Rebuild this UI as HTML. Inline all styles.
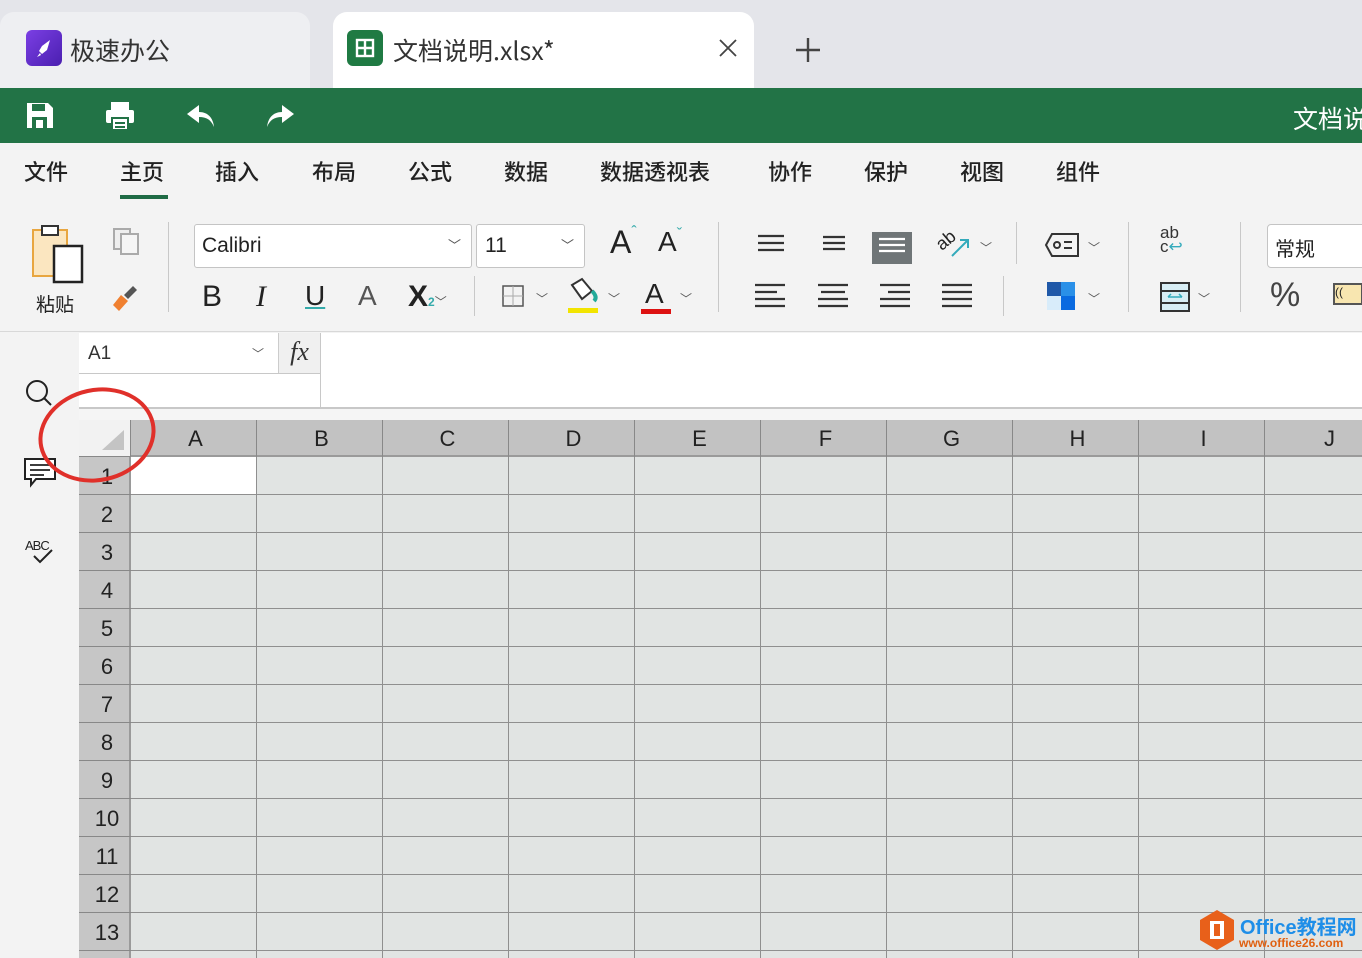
<!DOCTYPE html>
<html><head><meta charset="utf-8"><style>
*{margin:0;padding:0;box-sizing:border-box}
body{width:1362px;height:958px;overflow:hidden;background:#f3f3f3;font-family:"Liberation Sans","Noto Sans CJK SC",sans-serif;position:relative;color:#222}
.a{position:absolute}
.cjk{font-family:"Noto Sans CJK SC",sans-serif}
.menu span{position:absolute;top:155px;font-size:22px;font-family:"Noto Sans CJK SC",sans-serif;font-weight:500;color:#222}
.col{position:absolute;top:420px;height:37px;font-size:22px;text-align:center;line-height:38px;color:#222;border-right:1px solid #888;padding-left:4px}
.row{position:absolute;left:79px;width:52px;height:38px;font-size:22px;text-align:center;line-height:40px;border-bottom:1px solid #888;color:#222;padding-left:4px}
.ic{position:absolute}
.sep{position:absolute;width:1px;background:#c8c8c8}
</style></head><body>
<div class="a" style="left:0;top:0;width:1362px;height:88px;background:#e4e5ea"></div>
<div class="a" style="left:0;top:12px;width:310px;height:76px;background:#eeeff2;border-radius:14px 14px 0 0"></div>
<div class="a" style="left:26px;top:30px;width:36px;height:36px;background:linear-gradient(135deg,#7b3fe4,#4a1fb0);border-radius:6px"></div>
<svg class="ic" style="left:30px;top:34px" width="28" height="28" viewBox="0 0 28 28"><path d="M20 6 L12 12 L9 17 L12 20 L17 16 Z" fill="#fff"/><path d="M10 19 L7 23 L11 21Z" fill="#fff"/></svg>
<div class="a cjk" style="left:70px;top:32px;font-size:25px;color:#333">极速办公</div>
<div class="a" style="left:333px;top:12px;width:421px;height:76px;background:#fff;border-radius:14px 14px 0 0"></div>
<div class="a" style="left:347px;top:30px;width:36px;height:36px;background:#1f7a43;border-radius:6px"></div>
<svg class="ic" style="left:355px;top:38px" width="20" height="20"><rect x="2" y="2" width="16" height="16" fill="none" stroke="#fff" stroke-width="2.4"/><path d="M10 2V18M2 10H18" stroke="#fff" stroke-width="2.4"/></svg>
<div class="a cjk" style="left:393px;top:32px;font-size:25px;color:#333">文档说明.xlsx*</div>
<svg class="ic" style="left:719px;top:39px" width="18" height="18"><path d="M1 1L17 17M17 1L1 17" stroke="#444" stroke-width="1.8"/></svg>
<svg class="ic" style="left:795px;top:37px" width="26" height="26"><path d="M13 1V25M1 13H25" stroke="#444" stroke-width="2.4"/></svg>
<div class="a" style="left:0;top:88px;width:1362px;height:55px;background:#227346"></div>
<svg class="ic" style="left:25px;top:100px" width="30" height="30" viewBox="0 0 30 30"><path d="M2 3h21l5 5v20H2z" fill="#fff"/><rect x="7" y="4" width="13" height="7" fill="#227346"/><rect x="7" y="17" width="15" height="11" fill="#227346"/><rect x="11" y="20" width="7" height="8" fill="#fff"/></svg>
<svg class="ic" style="left:104px;top:100px" width="32" height="32" viewBox="0 0 32 32"><rect x="7" y="2" width="18" height="8" fill="#fff"/><rect x="2" y="10" width="28" height="13" rx="2" fill="#fff"/><rect x="8" y="18" width="16" height="12" fill="#fff" stroke="#227346" stroke-width="2"/><path d="M11 23h10M11 27h10" stroke="#227346" stroke-width="2"/></svg>
<svg class="ic" style="left:185px;top:103px" width="32" height="26" viewBox="0 0 32 26"><path d="M14 2L2 11l12 9v-6c8 0 12 3 15 10-1-9-6-15-15-15z" fill="#fff"/></svg>
<svg class="ic" style="left:264px;top:103px" width="32" height="26" viewBox="0 0 32 26"><path d="M18 2l12 9-12 9v-6c-8 0-12 3-15 10 1-9 6-15 15-15z" fill="#fff"/></svg>
<div class="a cjk" style="left:1293px;top:100px;font-size:25px;color:#fff;white-space:nowrap">文档说明</div>
<div class="menu">
<span style="left:24px">文件</span><span style="left:120px">主页</span><span style="left:215px">插入</span><span style="left:312px">布局</span><span style="left:408px">公式</span><span style="left:504px">数据</span><span style="left:600px">数据透视表</span><span style="left:768px">协作</span><span style="left:864px">保护</span><span style="left:960px">视图</span><span style="left:1056px">组件</span>
</div>
<div class="a" style="left:120px;top:195px;width:48px;height:4px;background:#1f6b45"></div>
<svg class="ic" style="left:30px;top:224px" width="56" height="60"><rect x="3" y="6" width="34" height="46" fill="#fbe6c0" stroke="#e8a640" stroke-width="2"/><rect x="12" y="2" width="16" height="9" fill="#fff" stroke="#333" stroke-width="2"/><rect x="24" y="22" width="28" height="36" fill="#fff" stroke="#222" stroke-width="2.5"/></svg>
<div class="a cjk" style="left:36px;top:290px;font-size:19px">粘贴</div>
<svg class="ic" style="left:112px;top:227px" width="30" height="30"><rect x="2" y="2" width="16" height="20" fill="#eee" stroke="#aaa" stroke-width="2"/><rect x="9" y="7" width="17" height="20" fill="#f5f5f5" stroke="#aaa" stroke-width="2"/></svg>
<svg class="ic" style="left:110px;top:283px" width="30" height="30"><path d="M3 22l8-10 7 6-9 10z" fill="#f08030"/><path d="M14 12l9-9 4 4-9 9z" fill="#555"/></svg>
<div class="sep" style="left:168px;top:222px;height:90px"></div>
<div class="a" style="left:194px;top:224px;width:278px;height:44px;background:#fff;border:1px solid #c4c4c4;border-radius:3px;font-size:21px;padding:9px 7px">Calibri<span style="position:absolute;right:10px;top:10px;font-size:13px;color:#555">﹀</span></div>
<div class="a" style="left:476px;top:224px;width:109px;height:44px;background:#fff;border:1px solid #c4c4c4;border-radius:3px;font-size:21px;padding:9px 8px">11<span style="position:absolute;right:10px;top:10px;font-size:13px;color:#555">﹀</span></div>
<div class="a" style="left:610px;top:224px;font-size:32px">A<span style="font-size:16px;color:#3aa;vertical-align:top">ˆ</span></div>
<div class="a" style="left:658px;top:226px;font-size:28px">A<span style="font-size:16px;color:#3aa;vertical-align:top">ˇ</span></div>
<div class="a" style="left:202px;top:280px;font-size:30px">B</div>
<div class="a" style="left:256px;top:280px;font-size:30px;font-style:italic;font-family:'Liberation Serif',serif">I</div>
<div class="a" style="left:305px;top:280px;font-size:28px;text-decoration:underline;text-decoration-color:#3aa">U</div>
<div class="a" style="left:358px;top:280px;font-size:28px;color:#555">A</div>
<div class="a" style="left:408px;top:280px;font-size:30px;font-weight:bold">X<span style="font-size:12px;color:#3aa">2</span><span style="font-size:12px;color:#555;font-weight:normal">﹀</span></div>
<div class="sep" style="left:474px;top:276px;height:40px"></div>
<svg class="ic" style="left:502px;top:285px" width="22" height="22"><rect x="1" y="1" width="20" height="20" fill="none" stroke="#555" stroke-width="1.5"/><path d="M11 1v20M1 11h20" stroke="#aaa"/></svg>
<div class="a" style="left:536px;top:290px;font-size:12px;color:#555">﹀</div>
<svg class="ic" style="left:566px;top:275px" width="36" height="40"><path d="M6 10l10-6 10 12-10 8z" fill="#fff" stroke="#333" stroke-width="2"/><path d="M26 16q6 6 2 10" stroke="#2a9" stroke-width="4" fill="none"/><rect x="2" y="33" width="30" height="5" fill="#f2e400"/></svg>
<div class="a" style="left:608px;top:290px;font-size:12px;color:#555">﹀</div>
<div class="a" style="left:645px;top:278px;font-size:28px">A</div>
<div class="a" style="left:641px;top:309px;width:30px;height:5px;background:#d11"></div>
<div class="a" style="left:680px;top:290px;font-size:12px;color:#555">﹀</div>
<div class="sep" style="left:718px;top:222px;height:90px"></div>
<svg class="ic" style="left:755px;top:232px" width="220" height="80" stroke="#333" stroke-width="2.2">
<path d="M3 4h26M3 11h26M3 18h26"/><path d="M68 5h22M68 11h22M68 17h22"/>
<rect x="117" y="-6" width="40" height="38" fill="#6f7577" stroke="none"/><path d="M124 7h26M124 13h26M124 19h26" stroke="#fff"/>
<path d="M0 53h30M0 60h22M0 67h30M0 74h30"/><path d="M63 53h30M66 60h24M63 67h30M63 74h30"/><path d="M125 53h30M133 60h22M125 67h30M125 74h30"/><path d="M187 53h30M187 60h30M187 67h30M187 74h30"/>
</svg>
<div class="a" style="left:936px;top:230px;font-size:18px;transform:rotate(-40deg)">ab</div>
<svg class="ic" style="left:950px;top:236px" width="22" height="22"><path d="M2 20L18 4M10 4h8v8" stroke="#3ab" stroke-width="2" fill="none"/></svg>
<div class="a" style="left:980px;top:239px;font-size:12px;color:#555">﹀</div>
<div class="sep" style="left:1016px;top:222px;height:42px"></div>
<div class="sep" style="left:1003px;top:276px;height:40px"></div>
<svg class="ic" style="left:1044px;top:232px" width="36" height="26"><path d="M8 2h26v22H8L2 13z" fill="none" stroke="#333" stroke-width="2"/><circle cx="13" cy="13" r="3" fill="none" stroke="#333" stroke-width="2"/><path d="M20 10h8M20 16h8" stroke="#333" stroke-width="2"/></svg>
<div class="a" style="left:1088px;top:239px;font-size:12px;color:#555">﹀</div>
<svg class="ic" style="left:1047px;top:282px" width="28" height="28"><rect x="0" y="0" width="14" height="14" fill="#1f58a8"/><rect x="14" y="0" width="14" height="14" fill="#2a90e8"/><rect x="0" y="14" width="14" height="14" fill="#d8ecfa"/><rect x="14" y="14" width="14" height="14" fill="#0a6ae0"/></svg>
<div class="a" style="left:1088px;top:290px;font-size:12px;color:#555">﹀</div>
<div class="sep" style="left:1128px;top:222px;height:90px"></div>
<div class="a" style="left:1160px;top:226px;font-size:17px;line-height:14px;color:#333">ab<br>c<span style="color:#3ab">↩</span></div>
<svg class="ic" style="left:1160px;top:282px" width="30" height="30"><rect x="1" y="1" width="28" height="28" fill="#d8eef5" stroke="#333" stroke-width="2"/><path d="M1 9h28M1 21h28" stroke="#333" stroke-width="2"/><path d="M8 15h14M8 15l3-3M22 15l-3-3" stroke="#3ab" stroke-width="1.5"/></svg>
<div class="a" style="left:1198px;top:290px;font-size:12px;color:#555">﹀</div>
<div class="sep" style="left:1240px;top:222px;height:90px"></div>
<div class="a cjk" style="left:1267px;top:224px;width:100px;height:44px;background:#fff;border:1px solid #c4c4c4;border-radius:4px;font-size:20px;padding:8px 7px">常规</div>
<div class="a" style="left:1270px;top:276px;font-size:34px;color:#444">%</div>
<div class="a" style="left:1333px;top:283px;width:30px;height:22px;border:2px solid #555;font-size:12px;background:#f8e6b0">((</div>
<div class="a" style="left:0;top:331px;width:1362px;height:1px;background:#d8d8d8"></div>
<svg class="ic" style="left:24px;top:378px" width="30" height="30"><circle cx="13" cy="13" r="10" fill="none" stroke="#222" stroke-width="2"/><path d="M20 20l7 7" stroke="#222" stroke-width="2"/></svg>
<svg class="ic" style="left:22px;top:456px" width="36" height="32"><path d="M3 3h30v20H14l-5 6v-6H3z" fill="#fff" stroke="#222" stroke-width="2"/><path d="M8 9h20M8 14h20M8 19h14" stroke="#222" stroke-width="1.8"/></svg>
<div class="a" style="left:25px;top:538px;font-size:13px;letter-spacing:-1px">ABC</div>
<svg class="ic" style="left:32px;top:548px" width="22" height="16"><path d="M2 8l6 6L20 2" stroke="#222" stroke-width="2" fill="none"/></svg>
<div class="a" style="left:79px;top:333px;width:1283px;height:75px;background:#fff"></div>
<div class="a" style="left:79px;top:373px;width:242px;height:1px;background:#c8c8c8"></div>
<div class="a" style="left:320px;top:333px;width:1px;height:75px;background:#c8c8c8"></div>
<div class="a" style="left:278px;top:333px;width:42px;height:40px;background:#f0f0f0;border-left:1px solid #ccc;font-family:'Liberation Serif',serif;font-style:italic;font-size:26px;text-align:center;line-height:38px;color:#333">fx</div>
<div class="a" style="left:88px;top:343px;font-size:19px;color:#333">A1</div>
<div class="a" style="left:252px;top:345px;font-size:12px;color:#555">﹀</div>
<div class="a" style="left:79px;top:407px;width:1283px;height:2px;background:#c8c8c8"></div>
<div class="a" style="left:79px;top:409px;width:1283px;height:11px;background:#f5f5f5"></div>
<div class="a" style="left:131px;top:457px;width:1231px;height:501px;background-color:#e1e4e3;background-image:repeating-linear-gradient(90deg,transparent 0 125px,#8f8f8f 125px 126px),repeating-linear-gradient(180deg,transparent 0 37px,#8f8f8f 37px 38px)"></div>
<div class="a" style="left:131px;top:457px;width:125px;height:37px;background:#fff"></div>
<div class="a" style="left:79px;top:420px;width:52px;height:37px;background:#f2f2f2;border-right:1px solid #888;border-bottom:1px solid #888"></div>
<svg class="ic" style="left:100px;top:428px" width="26" height="24"><path d="M24 2V22H2z" fill="#c4c4c4"/></svg>
<div class="a" style="left:131px;top:420px;width:1231px;height:37px;background:#c2c2c2;border-bottom:2px solid #9a9a9a"></div>
<div class="col" style="left:131px;width:126px">A</div><div class="col" style="left:257px;width:126px">B</div><div class="col" style="left:383px;width:126px">C</div><div class="col" style="left:509px;width:126px">D</div><div class="col" style="left:635px;width:126px">E</div><div class="col" style="left:761px;width:126px">F</div><div class="col" style="left:887px;width:126px">G</div><div class="col" style="left:1013px;width:126px">H</div><div class="col" style="left:1139px;width:126px">I</div><div class="col" style="left:1265px;width:126px">J</div>
<div class="a" style="left:79px;top:457px;width:52px;height:501px;background:#c6c6c6;border-right:2px solid #9a9a9a"></div>
<div class="row" style="top:457px">1</div><div class="row" style="top:495px">2</div><div class="row" style="top:533px">3</div><div class="row" style="top:571px">4</div><div class="row" style="top:609px">5</div><div class="row" style="top:647px">6</div><div class="row" style="top:685px">7</div><div class="row" style="top:723px">8</div><div class="row" style="top:761px">9</div><div class="row" style="top:799px">10</div><div class="row" style="top:837px">11</div><div class="row" style="top:875px">12</div><div class="row" style="top:913px">13</div>
<div class="a" style="left:38px;top:388px;width:118px;height:94px;border:4px solid #e0302a;border-radius:50%;transform:rotate(-12deg)"></div>
<svg class="ic" style="left:1198px;top:909px" width="38" height="42"><path d="M19 1L36 11V31L19 41L2 31V11Z" fill="#e8601a"/><rect x="12" y="12" width="14" height="18" fill="#fff"/><rect x="16" y="15" width="6" height="12" fill="#e8601a"/></svg>
<div class="a" style="left:1240px;top:911px;font-size:20px;font-weight:bold;color:#1e8ee8;white-space:nowrap">Office<span class="cjk">教程网</span></div>
<div class="a" style="left:1239px;top:936px;font-size:12px;font-weight:bold;color:#e06010">www.office26.com</div>
</body></html>
